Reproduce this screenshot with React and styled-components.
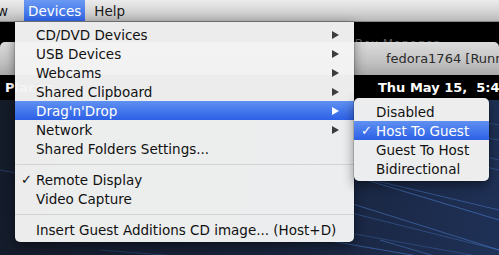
import React from 'react';
import styled, { createGlobalStyle, css } from 'styled-components';

const GlobalStyle = createGlobalStyle`
  html, body {
    margin: 0;
    padding: 0;
    background: #000;
    overflow: hidden;
  }
`

const Screen = styled.div`
  position: relative;
  width: 499px;
  height: 255px;
  overflow: hidden;
  display: flex;
  flex-direction: column;
  font-family: "DejaVu Sans", "Liberation Sans", sans-serif;
`

const MenuBar = styled.div`
  height: 21px;
  flex: none;
  display: flex;
  align-items: stretch;
  gap: 5px;
  background: linear-gradient(#ececec, #d4d4d4 55%, #b9b9b9);
  border-bottom: 1px solid #8a8a8a;
  font-size: 13.5px;
`

const BarItem = styled.div`
  display: flex;
  align-items: center;
  padding: 0 4px;
  color: #1a1a1a;
  ${p => p.$clip && css`
    margin-left: -28px;
    margin-right: 7px;
  `}
  ${p => p.$active && css`
    background: linear-gradient(#6a9af3, #2f63e6);
    color: #fff;
  `}
`

const Desktop = styled.div`
  flex: 1;
  display: flex;
  flex-direction: column;
  background: #000;
`

const BackStrip = styled.div`
  height: 20px;
  flex: none;
  display: flex;
  align-items: flex-end;
  padding-left: 312px;
`

const GhostTitle = styled.span`
  font-size: 12px;
  letter-spacing: 0.5px;
  color: #5a5a5a;
  line-height: 1;
  margin-bottom: -8px;
  white-space: nowrap;
`

const TitleBar = styled.div`
  position: relative;
  height: 33px;
  flex: none;
  display: flex;
  align-items: center;
  padding-left: 386px;
  background: linear-gradient(#dcdcdc, #c2c2c2 60%, #a9a9a9);
  border-radius: 5px 5px 0 0;
  font-size: 13px;
  color: #2b2b2b;
  white-space: nowrap;
`

const Panel = styled.div`
  height: 25px;
  flex: none;
  display: grid;
  grid-template-columns: 373px auto;
  align-items: center;
  padding-left: 5px;
  background: #000;
  color: #fff;
  font-weight: bold;
  font-size: 13px;
  white-space: nowrap;
  overflow: hidden;
`

const Wallpaper = styled.div`
  flex: 1;
  position: relative;
  background: linear-gradient(100deg, #141b29 0%, #18223a 55%, #1f3157 100%);
  overflow: hidden;
`

const Streaks = styled.svg`
  position: absolute;
  inset: 0;
`

const Menu = styled.div`
  position: absolute;
  background: rgba(244, 244, 244, 0.97);
  box-shadow: 0 4px 12px rgba(0, 0, 0, 0.45), 0 0 0 1px rgba(0, 0, 0, 0.12);
  font-size: 13.5px;
  color: #111;
  white-space: nowrap;
`

const DevicesMenu = styled(Menu)`
  left: 15px;
  top: 22px;
  width: 339px;
  padding: 3px 0 3px;
  border-radius: 0 0 5px 5px;
`

const SubMenu = styled(Menu)`
  left: 354px;
  top: 98px;
  width: 135px;
  padding: 4px 0 3px;
  border-radius: 5px;
`

const Item = styled.div`
  height: 19px;
  display: flex;
  align-items: center;
  position: relative;
  padding-left: ${p => p.$indent}px;
  padding-right: 15px;
  ${p => p.$active && css`
    background: linear-gradient(#5f90f1, #2c60e6);
    color: #fff;
  `}
`

const Label = styled.span`
  flex: 1;
`

const Check = styled.span`
  position: absolute;
  left: ${p => p.$left}px;
  font-size: 13px;
`

const Arrow = styled.span`
  width: 0;
  height: 0;
  border-top: 4.5px solid transparent;
  border-bottom: 4.5px solid transparent;
  border-left: 7px solid ${p => (p.$active ? '#fff' : '#3c3c3c')};
`

const Separator = styled.div`
  height: 12px;
  display: flex;
  align-items: center;
  &::after {
    content: '';
    flex: 1;
    height: 1px;
    background: #d4d4d4;
  }
`

const devices = [
  { label: 'CD/DVD Devices', sub: true },
  { label: 'USB Devices', sub: true },
  { label: 'Webcams', sub: true },
  { label: 'Shared Clipboard', sub: true },
  { label: "Drag'n'Drop", sub: true, active: true },
  { label: 'Network', sub: true },
  { label: 'Shared Folders Settings...' },
  { sep: true },
  { label: 'Remote Display', checked: true },
  { label: 'Video Capture' },
  { sep: true },
  { label: 'Insert Guest Additions CD image... (Host+D)' },
]

const dnd = [
  { label: 'Disabled' },
  { label: 'Host To Guest', checked: true, active: true },
  { label: 'Guest To Host' },
  { label: 'Bidirectional' },
]

const streaks = [
  [60, 40, 499, 150, 0.35],
  [120, 20, 499, 110, 0.45],
  [200, 0, 499, 70, 0.4],
  [260, 0, 499, 40, 0.35],
  [0, 70, 499, 160, 0.3],
  [150, 110, 499, 170, 0.5],
  [300, 60, 499, 120, 0.55],
  [330, 20, 499, 60, 0.4],
  [340, 100, 499, 150, 0.5],
  [380, 140, 499, 175, 0.45],
  [100, 150, 420, 175, 0.25],
  [360, 0, 499, 25, 0.3],
]

export default function App() {
  return (
    <>
      <GlobalStyle />
      <Screen>
        <MenuBar>
          <BarItem $clip>View</BarItem>
          <BarItem $active>Devices</BarItem>
          <BarItem>Help</BarItem>
        </MenuBar>
        <Desktop>
          <BackStrip>
            <GhostTitle>VirtualBox Manager</GhostTitle>
          </BackStrip>
          <TitleBar>fedora1764 [Running]</TitleBar>
          <Panel>
            <span>Places</span>
            <span>Thu May 15,&nbsp; 5:46 PM</span>
          </Panel>
          <Wallpaper>
            <Streaks width="499" height="155" viewBox="0 0 499 155">
              {streaks.map(([x1, y1, x2, y2, o], i) => (
                <line key={i} x1={x1} y1={y1} x2={x2} y2={y2}
                  stroke="#4f86d6" strokeWidth="1" opacity={o} />
              ))}
            </Streaks>
          </Wallpaper>
        </Desktop>

        <DevicesMenu>
          {devices.map((d, i) =>
            d.sep ? <Separator key={i} /> : (
              <Item key={i} $indent={21} $active={d.active}>
                {d.checked && <Check $left={6}>✓</Check>}
                <Label>{d.label}</Label>
                {d.sub && <Arrow $active={d.active} />}
              </Item>
            )
          )}
        </DevicesMenu>

        <SubMenu>
          {dnd.map((d, i) => (
            <Item key={i} $indent={22} $active={d.active}>
              {d.checked && <Check $left={7}>✓</Check>}
              <Label>{d.label}</Label>
            </Item>
          ))}
        </SubMenu>
      </Screen>
    </>
  );
}
